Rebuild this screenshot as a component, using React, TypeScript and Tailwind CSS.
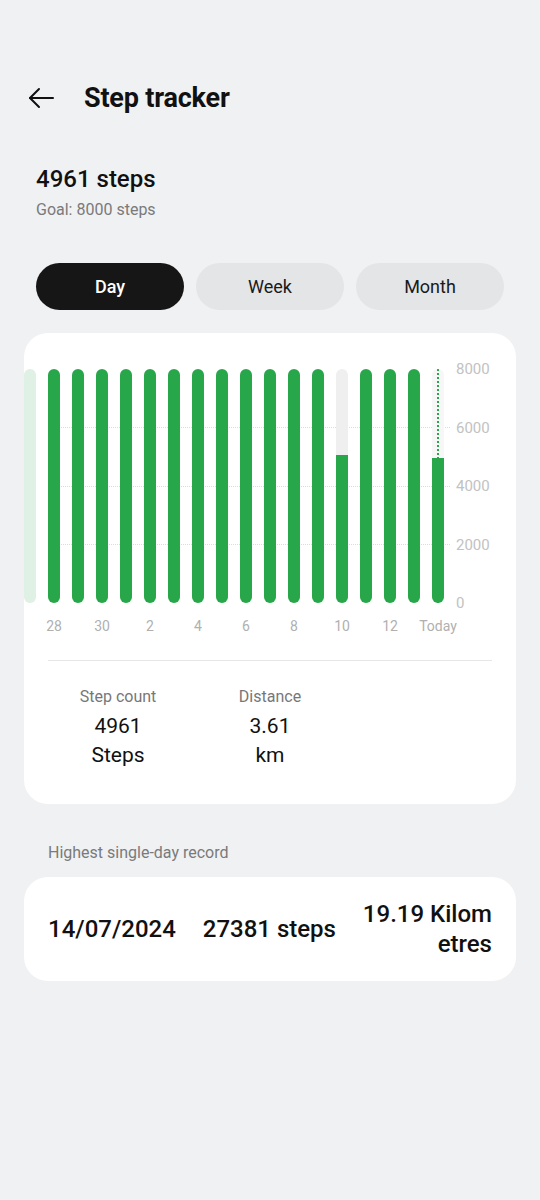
import React from "react";

type Bar = { v: number; kind: "full" | "faded" | "partial" | "today" };

const bars: Bar[] = [
  { v: 8000, kind: "faded" },
  ...Array.from({ length: 12 }, () => ({ v: 8000, kind: "full" as const })),
  { v: 5060, kind: "partial" },
  { v: 8000, kind: "full" },
  { v: 8000, kind: "full" },
  { v: 8000, kind: "full" },
  { v: 4961, kind: "today" },
];

const xLabels = ["28", "30", "2", "4", "6", "8", "10", "12", "Today"];

function BarCol({ b }: { b: Bar }) {
  if (b.kind === "faded") {
    return <div className="w-[12px] h-full rounded-full bg-[#dff0e4]" />;
  }
  if (b.kind === "full") {
    return <div className="w-[12px] h-full rounded-full bg-[#27a74a]" />;
  }
  const pct = (b.v / 8000) * 100;
  return (
    <div
      className={`relative w-[12px] h-full rounded-full overflow-hidden ${
        b.kind === "today" ? "bg-[#f7f7f7]" : "bg-[#efefef]"
      }`}
    >
      {b.kind === "today" && (
        <div className="absolute left-[5px] top-0 bottom-0 w-[2px] border-l-2 border-dotted border-[#27a74a]" />
      )}
      <div className="absolute left-0 right-0 bottom-0 bg-[#27a74a]" style={{ height: `${pct}%` }} />
    </div>
  );
}

export default function App() {
  return (
    <div
      className="w-[540px] h-[1200px] overflow-hidden bg-[#f0f1f3] text-[#111] pt-[78px]"
      style={{ fontFamily: "Roboto, 'Noto Sans', sans-serif" }}
    >
      {/* Header */}
      <div className="flex items-center h-[40px] pl-[28px]">
        <svg width="26" height="22" viewBox="0 0 26 22" fill="none" stroke="#111" strokeWidth="2" strokeLinecap="round" strokeLinejoin="round">
          <path d="M25 11H2" />
          <path d="M11 2L2 11L11 20" />
        </svg>
        <div className="ml-[30px] text-[27px] font-bold leading-[40px] tracking-[-0.2px]">Step tracker</div>
      </div>

      {/* Summary */}
      <div className="pl-[36px] mt-[45px]">
        <div className="text-[24px] font-medium leading-[32px]">4961 steps</div>
        <div className="text-[16px] text-[#7a7a7a] leading-[20px] mt-[5px]">Goal: 8000 steps</div>
      </div>

      {/* Tabs */}
      <div className="flex gap-[12px] px-[36px] mt-[43px]">
        <div className="flex-1 h-[47px] rounded-full bg-[#161616] text-white text-[18px] font-medium flex items-center justify-center">Day</div>
        <div className="flex-1 h-[47px] rounded-full bg-[#e4e5e7] text-[#1a1a1a] text-[18px] flex items-center justify-center">Week</div>
        <div className="flex-1 h-[47px] rounded-full bg-[#e4e5e7] text-[#1a1a1a] text-[18px] flex items-center justify-center">Month</div>
      </div>

      {/* Chart card */}
      <div className="mx-[24px] mt-[23px] bg-white rounded-[24px] overflow-hidden pt-[36px] pb-[34px]">
        <div className="relative flex">
          {/* gridlines */}
          <div className="absolute left-[24px] w-[402px] top-0 h-[234px] flex flex-col justify-between pointer-events-none">
            <div className="h-0" />
            <div className="border-t border-dotted border-[#dcdcdc]" />
            <div className="border-t border-dotted border-[#dcdcdc]" />
            <div className="border-t border-dotted border-[#dcdcdc]" />
            <div className="h-0" />
          </div>
          <div className="relative flex gap-[12px] h-[234px]">
            {bars.map((b, i) => (
              <BarCol key={i} b={b} />
            ))}
          </div>
          <div className="ml-[12px] -my-[10px] h-[254px] flex flex-col justify-between text-[15px] text-[#c2c2c2] leading-[20px]">
            <div>8000</div>
            <div>6000</div>
            <div>4000</div>
            <div>2000</div>
            <div>0</div>
          </div>
        </div>
        {/* x labels */}
        <div className="flex mt-[13px] pl-[6px]">
          {xLabels.map((l) => (
            <div key={l} className="w-[48px] text-center text-[14px] leading-[20px] text-[#b0b0b0] whitespace-nowrap">
              {l}
            </div>
          ))}
        </div>
        <div className="mx-[24px] mt-[24px] h-px bg-[#e6e6e6]" />
        <div className="flex gap-[12px] pl-[24px] mt-[25px]">
          <div className="w-[140px] flex flex-col items-center">
            <div className="text-[16px] leading-[22px] text-[#777]">Step count</div>
            <div className="mt-[4px] text-[21px] leading-[29px] text-center">
              4961
              <br />
              Steps
            </div>
          </div>
          <div className="w-[140px] flex flex-col items-center">
            <div className="text-[16px] leading-[22px] text-[#777]">Distance</div>
            <div className="mt-[4px] text-[21px] leading-[29px] text-center">
              3.61
              <br />
              km
            </div>
          </div>
        </div>
      </div>

      {/* Record */}
      <div className="pl-[48px] mt-[39px] text-[16px] leading-[20px] text-[#7a7a7a]">Highest single-day record</div>
      <div className="mx-[24px] mt-[14px] h-[104px] bg-white rounded-[24px] px-[24px] flex items-center justify-between">
        <div className="text-[24px] font-medium leading-[30px]">14/07/2024</div>
        <div className="text-[24px] font-medium leading-[30px]">27381 steps</div>
        <div className="text-[24px] font-medium leading-[30px] text-right">
          19.19 Kilom
          <br />
          etres
        </div>
      </div>
    </div>
  );
}
